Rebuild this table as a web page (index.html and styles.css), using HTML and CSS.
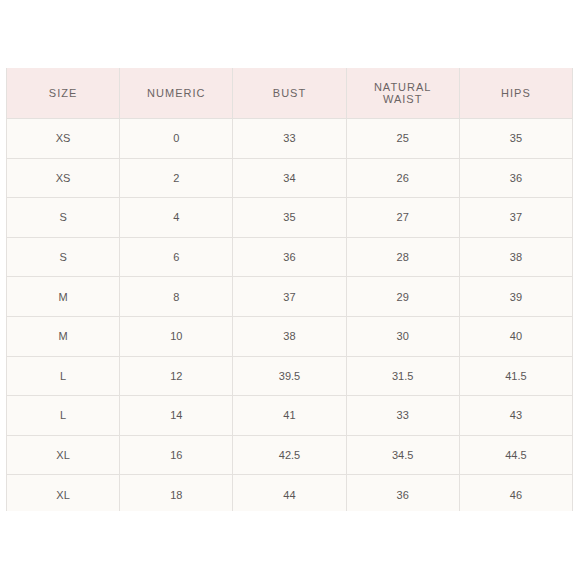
FILE: index.html
```html
<!DOCTYPE html>
<html>
<head>
<meta charset="utf-8">
<link rel="stylesheet" href="styles.css">
</head>
<body>
<div class="page">
  <div class="clip">
    <div class="chart">
      <div class="cell head">SIZE</div>
      <div class="cell head">NUMERIC</div>
      <div class="cell head">BUST</div>
      <div class="cell head">NATURAL<br>WAIST</div>
      <div class="cell head">HIPS</div>

      <div class="cell">XS</div><div class="cell">0</div><div class="cell">33</div><div class="cell">25</div><div class="cell">35</div>
      <div class="cell">XS</div><div class="cell">2</div><div class="cell">34</div><div class="cell">26</div><div class="cell">36</div>
      <div class="cell">S</div><div class="cell">4</div><div class="cell">35</div><div class="cell">27</div><div class="cell">37</div>
      <div class="cell">S</div><div class="cell">6</div><div class="cell">36</div><div class="cell">28</div><div class="cell">38</div>
      <div class="cell">M</div><div class="cell">8</div><div class="cell">37</div><div class="cell">29</div><div class="cell">39</div>
      <div class="cell">M</div><div class="cell">10</div><div class="cell">38</div><div class="cell">30</div><div class="cell">40</div>
      <div class="cell">L</div><div class="cell">12</div><div class="cell">39.5</div><div class="cell">31.5</div><div class="cell">41.5</div>
      <div class="cell">L</div><div class="cell">14</div><div class="cell">41</div><div class="cell">33</div><div class="cell">43</div>
      <div class="cell">XL</div><div class="cell">16</div><div class="cell">42.5</div><div class="cell">34.5</div><div class="cell">44.5</div>
      <div class="cell">XL</div><div class="cell">18</div><div class="cell">44</div><div class="cell">36</div><div class="cell">46</div>
    </div>
  </div>
</div>
</body>
</html>
```
FILE: styles.css
```css
html, body {
  margin: 0;
  padding: 0;
  background: #ffffff;
}
.page {
  padding: 68px 0 0 6px;
  font-family: "Liberation Sans", Arial, sans-serif;
}
.clip {
  width: 567px;
  height: 443px;
  overflow: hidden;
}
.chart {
  display: grid;
  grid-template-columns: repeat(5, 1fr);
  grid-template-rows: 50px repeat(10, 38.6px);
  gap: 1px;
  padding: 0 1px;
  background: #e4e1de;
}
.cell {
  display: flex;
  align-items: center;
  justify-content: center;
  text-align: center;
  background: #fcfaf7;
  color: #5a5656;
  font-size: 11px;
}
.head {
  background: #f8eae9;
  color: #6b6464;
  letter-spacing: 1px;
  line-height: 12px;
}
```
